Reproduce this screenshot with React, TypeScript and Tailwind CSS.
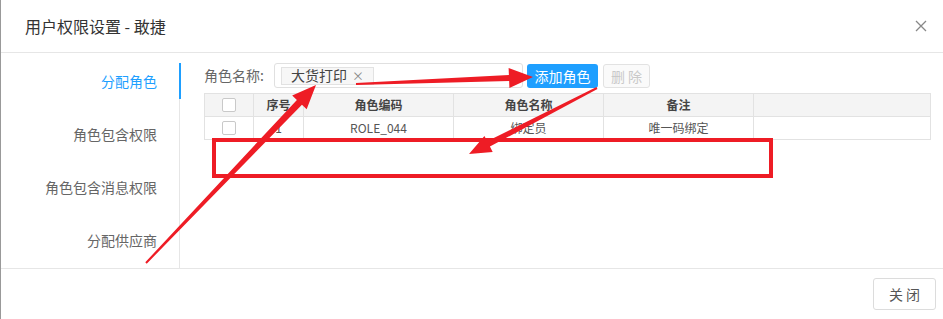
import React from "react";

type Pt = [number, number];

// tapered annotation arrow, drawn as one polygon
function arrowPoints(tail: Pt, tip: Pt, tailW: number, shaftW: number, headW: number, headL: number) {
  const dx = tip[0] - tail[0];
  const dy = tip[1] - tail[1];
  const len = Math.hypot(dx, dy);
  const ux = dx / len;
  const uy = dy / len;
  const nx = -uy;
  const ny = ux;
  const bx = tip[0] - ux * headL;
  const by = tip[1] - uy * headL;
  const p = (x: number, y: number, n: number): string => `${x + nx * n},${y + ny * n}`;
  return [
    p(tail[0], tail[1], tailW / 2),
    p(bx, by, shaftW / 2),
    p(bx, by, headW / 2),
    `${tip[0]},${tip[1]}`,
    p(bx, by, -headW / 2),
    p(bx, by, -shaftW / 2),
    p(tail[0], tail[1], -tailW / 2),
  ].join(" ");
}

const navItems = ["分配角色", "角色包含权限", "角色包含消息权限", "分配供应商"];

const columns = [
  { label: "序号", w: "w-[50px]" },
  { label: "角色编码", w: "w-[150px]" },
  { label: "角色名称", w: "w-[150px]" },
  { label: "备注", w: "w-[150px]" },
];

function Checkbox() {
  return <span className="block w-[14px] h-[14px] border border-[#c9c9c9] rounded-[2px] bg-white" />;
}

export default function App() {
  return (
    <div
      className="relative w-[943px] h-[319px] bg-white border-l border-[#999] overflow-hidden flex flex-col text-[#333]"
      style={{ fontFamily: '"Noto Sans CJK SC", "Noto Sans", sans-serif' }}
    >
      {/* header */}
      <div className="h-[53px] shrink-0 flex items-center justify-between pl-[24px] pr-[16px] border-b border-[#e6e6e6]">
        <span className="text-[16px] text-[#333]">用户权限设置 - 敢捷</span>
        <svg width="12" height="12" viewBox="0 0 12 12" className="text-[#888]">
          <path d="M1 1 L11 11 M11 1 L1 11" stroke="currentColor" strokeWidth="1.3" />
        </svg>
      </div>

      {/* body */}
      <div className="flex h-[216px] shrink-0 border-b border-[#e6e6e6]">
        <div className="pt-[10px]">
          <div className="w-[179px] border-r border-[#e6e6e6] flex flex-col gap-[17px] pb-[10px]">
            {navItems.map((item, i) => (
              <div
                key={item}
                className={`relative h-[36px] flex items-center justify-end pr-[22px] text-[14px] ${
                  i === 0 ? "text-[#1e9fff]" : "text-[#666]"
                }`}
              >
                {item}
                {i === 0 && <span className="absolute top-0 right-[-2px] w-[2px] h-full bg-[#1e9fff]" />}
              </div>
            ))}
          </div>
        </div>

        <div className="flex-1 pl-[24px] pr-[12px] pt-[10px]">
          {/* toolbar */}
          <div className="flex items-center h-[25px]">
            <span className="text-[14px] text-[#666] w-[70px]">角色名称:</span>
            <div className="w-[249px] h-[25px] border border-[#e0e0e0] rounded-[3px] flex items-center pl-[6px]">
              <span className="h-[18px] flex items-center gap-[5px] px-[9px] bg-[#f7f7f7] border border-[#e2e2e2] text-[14px] text-[#444]">
                大货打印
                <span className="text-[12px] text-[#888]">×</span>
              </span>
            </div>
            <button className="ml-[4px] w-[71px] h-[24px] rounded-[3px] bg-[#1e9fff] text-white text-[14px] leading-none">
              添加角色
            </button>
            <button className="ml-[5px] w-[47px] h-[24px] rounded-[3px] border border-[#e2e2e2] bg-[#fafafa] text-[#c9c9c9] text-[14px] leading-none">
              删 除
            </button>
          </div>

          {/* table */}
          <div className="mt-[5px] w-[727px] border border-[#e2e2e2] text-[12px]">
            <div className="flex h-[23px] bg-[#f4f4f4] border-b border-[#e2e2e2] font-bold text-[#444]">
              <div className="w-[49px] border-r border-[#e2e2e2] flex items-center justify-center">
                <Checkbox />
              </div>
              {columns.map((c) => (
                <div key={c.label} className={`${c.w} border-r border-[#e2e2e2] flex items-center justify-center`}>
                  {c.label}
                </div>
              ))}
            </div>
            <div className="flex h-[22px] text-[#555]">
              <div className="w-[49px] border-r border-[#e2e2e2] flex items-center justify-center">
                <Checkbox />
              </div>
              {["1", "ROLE_044", "绑定员", "唯一码绑定"].map((v, i) => (
                <div key={v} className={`${columns[i].w} border-r border-[#e2e2e2] flex items-center justify-center`}>
                  {v}
                </div>
              ))}
            </div>
          </div>
        </div>
      </div>

      {/* footer */}
      <div className="flex-1 flex items-center justify-end pr-[7px]">
        <button className="w-[63px] h-[32px] rounded-[3px] border border-[#dcdcdc] text-[14px] text-[#555] bg-white">
          关 闭
        </button>
      </div>

      {/* red annotations */}
      <svg className="absolute left-[-1px] top-0 pointer-events-none" width="943" height="319">
        <polygon fill="#ee1c25" points={arrowPoints([146, 263], [316, 85], 2, 7, 20, 24)} />
        <polygon fill="#ee1c25" points={arrowPoints([356, 84], [533, 77], 2, 6, 20, 24)} />
        <polygon fill="#ee1c25" points={arrowPoints([597, 88], [469, 154], 2, 6, 18, 22)} />
        <rect x="214" y="140" width="557" height="36" fill="none" stroke="#ee1c25" strokeWidth="4" />
      </svg>
    </div>
  );
}
